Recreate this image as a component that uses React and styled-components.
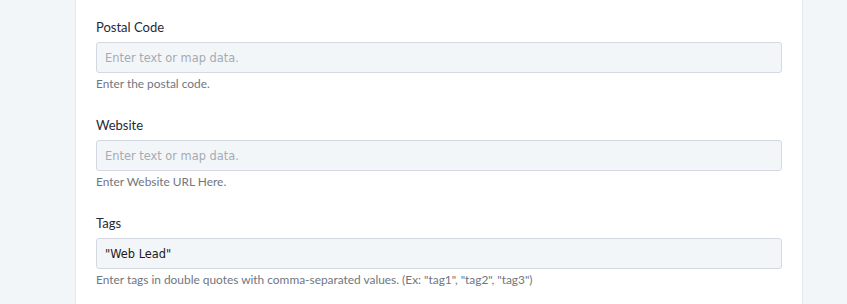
import React from 'react'
import styled, { createGlobalStyle } from 'styled-components'

const GlobalStyles = createGlobalStyle`
  html, body {
    margin: 0;
    padding: 0;
    background: #f3f6f9;
  }
  body {
    font-family: Lato, "Open Sans", "Liberation Sans", sans-serif;
  }
`

const Page = styled.div`
  display: flex;
  height: 304px;
  overflow: hidden;
  padding-left: 76px;
`

const Card = styled.div`
  width: 726px;
  background: #ffffff;
  box-shadow: -1px 0 0 #e3e9f1, 1px 0 0 #e3e9f1;
  padding: 18px 20px 0 20px;
  box-sizing: border-box;
`

const Field = styled.div`
  margin-bottom: 24px;
`

const Label = styled.label`
  display: block;
  font-size: 13px;
  line-height: 18px;
  color: #1f2a37;
  margin-bottom: 6px;
`

const Input = styled.input`
  display: block;
  width: 100%;
  height: 31px;
  box-sizing: border-box;
  border: 1px solid #d4d9e1;
  border-radius: 3px;
  background: #f3f6f9;
  padding: 0 8px;
  font-family: "DejaVu Sans", Verdana, sans-serif;
  font-size: 11.4px;
  color: #1a1a1a;
  outline: none;

  &::placeholder {
    color: #a5abb3;
  }
`

const Help = styled.div`
  margin-top: 3px;
  font-size: 11.9px;
  line-height: 16px;
  color: #6f7680;
`

const fields = [
  { label: 'Postal Code', help: 'Enter the postal code.' },
  { label: 'Website', help: 'Enter Website URL Here.' },
  {
    label: 'Tags',
    value: '"Web Lead"',
    help: 'Enter tags in double quotes with comma-separated values. (Ex: "tag1", "tag2", "tag3")',
  },
]

const App = () => {
  return (
    <>
      <GlobalStyles />
      <Page>
        <Card>
          {fields.map(f => (
            <Field key={f.label}>
              <Label>{f.label}</Label>
              <Input
                type="text"
                placeholder="Enter text or map data."
                defaultValue={f.value}
              />
              <Help>{f.help}</Help>
            </Field>
          ))}
        </Card>
      </Page>
    </>
  )
}

export default App
